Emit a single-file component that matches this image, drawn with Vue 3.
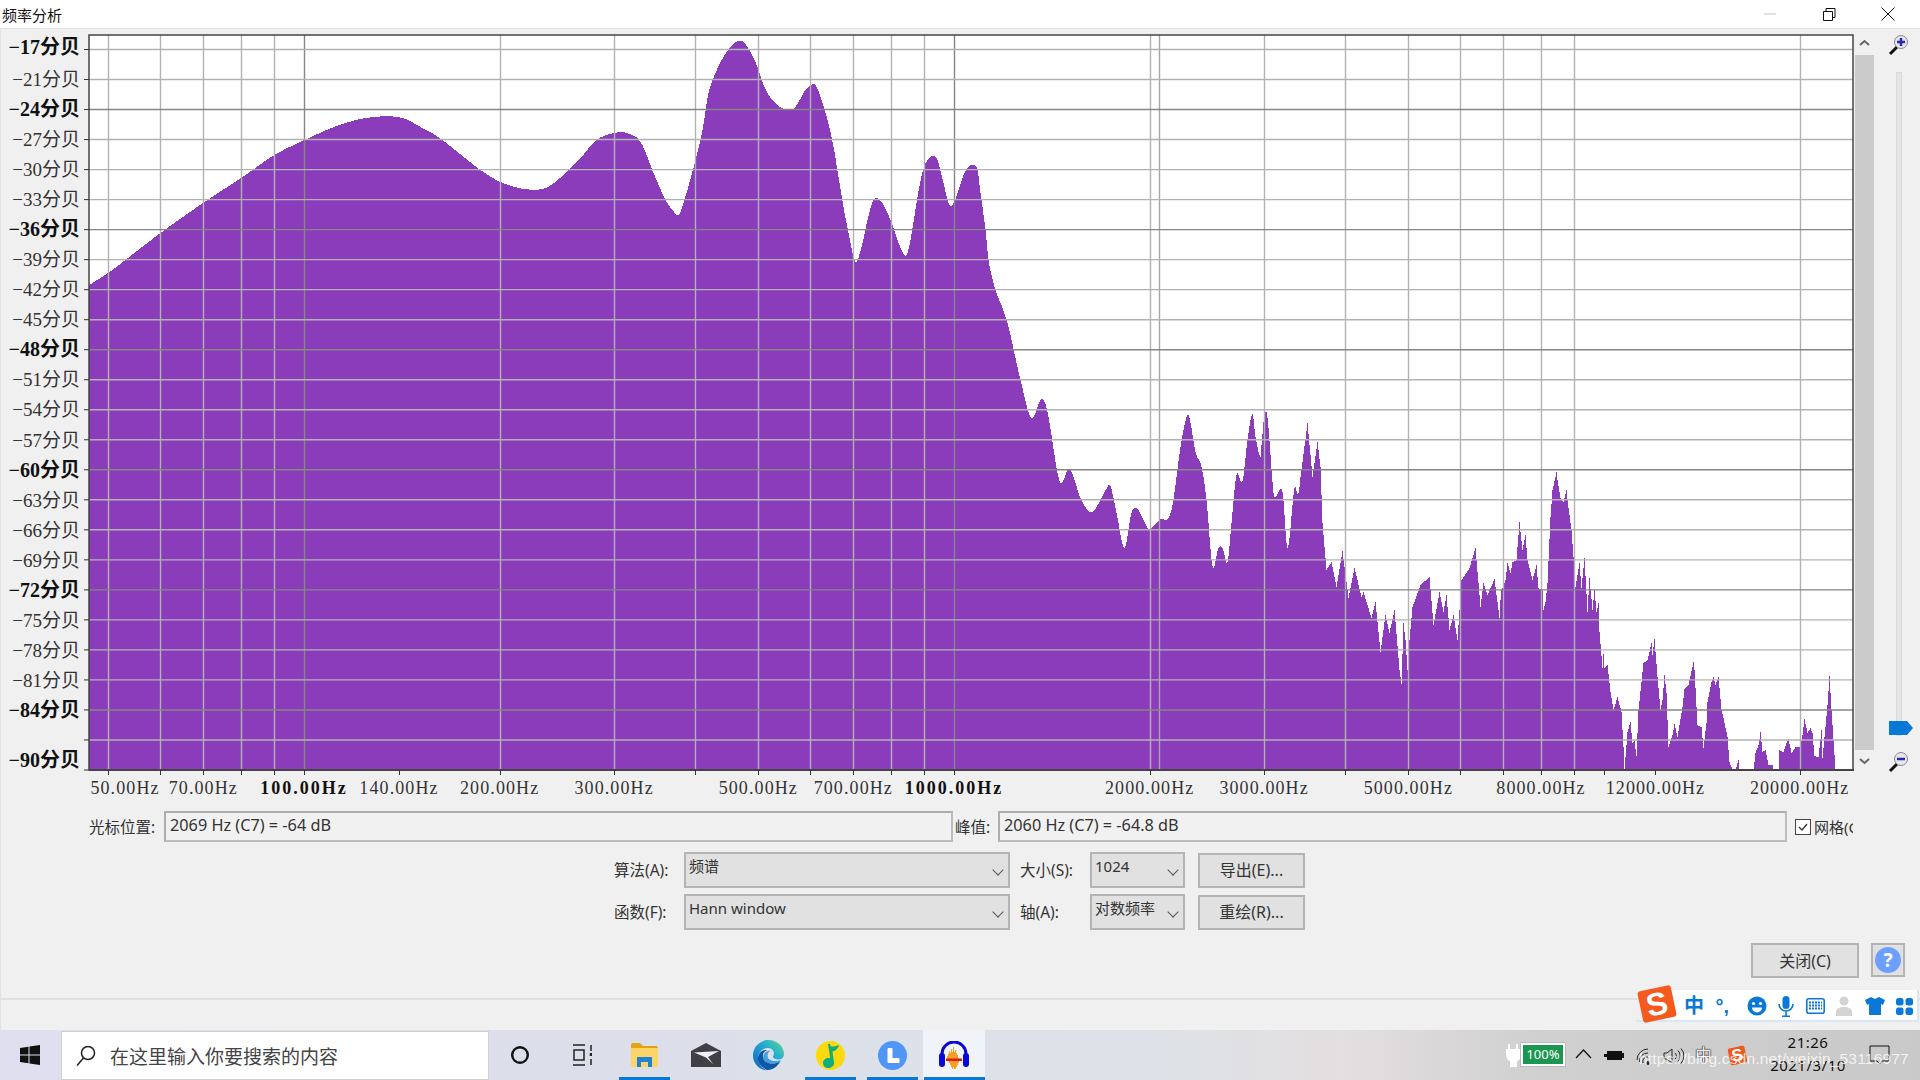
<script setup>
const left = 89
const right = 1853
const top = 6
const bottom = 741
const offsetY = 29

const labels = [-17, -21, -24, -27, -30, -33, -36, -39, -42, -45, -48, -51, -54, -57, -60, -63, -66, -69, -72, -75, -78, -81, -84]
const boldDb = [-17, -24, -36, -48, -60, -72, -84]

const hLines = []
for (let i = 0; i < 24; i++) {
  const y = 49.5 + i * 30.02 - offsetY
  const db = labels[i]
  hLines.push({ y, db, major: db === undefined ? false : (boldDb.includes(db) && db !== -17) })
}

const freqX = (f) => 304 + 650 * Math.log10(f / 100)

const gridFreq = [50, 60, 70, 80, 90, 100, 200, 300, 400, 500, 600, 700, 800, 900, 1000, 2000, 3000, 4000, 5000, 6000, 7000, 8000, 9000, 20000]
const vLines = gridFreq.map((f) => ({ x: Math.round(freqX(f)) + 0.5, major: f === 100 || f === 1000 }))
const tickFreq = [...gridFreq, 140, 10000, 12000]
const ticks = tickFreq.map((f) => Math.round(freqX(f)) + 0.5)

const freqLabels = [
  { f: 50, t: '50.00Hz', x: 125 }, { f: 70, t: '70.00Hz' }, { f: 100, t: '100.00Hz', bold: true },
  { f: 140, t: '140.00Hz' }, { f: 200, t: '200.00Hz' }, { f: 300, t: '300.00Hz' },
  { f: 500, t: '500.00Hz' }, { f: 700, t: '700.00Hz' }, { f: 1000, t: '1000.00Hz', bold: true },
  { f: 2000, t: '2000.00Hz' }, { f: 3000, t: '3000.00Hz' }, { f: 5000, t: '5000.00Hz' },
  { f: 8000, t: '8000.00Hz' }, { f: 12000, t: '12000.00Hz' }, { f: 20000, t: '20000.00Hz' }
].map((l) => ({ ...l, x: l.x || freqX(l.f) }))

// traced from the spectrum, page coordinates
const trace = [
  [89, 285], [109, 272], [160, 233], [204, 202], [242, 177], [274, 155], [304, 140], [339, 125], [369, 117.5], [400, 117.5],
  [420, 127], [439, 138], [480, 170], [500, 182], [524, 189], [545, 188], [563, 175], [580, 158], [596, 140], [614, 133], [626, 133],
  [640, 142], [653, 173], [665, 200], [672, 210], [678, 215], [683, 203], [695, 160], [702, 130], [708, 93], [715, 73], [723, 57],
  [732, 45], [738, 41], [743, 42], [750, 52], [757, 67], [762, 82], [768, 95], [777, 105], [784, 109], [793, 109], [798, 102],
  [805, 90], [812, 84], [815, 85], [820, 97], [827, 120], [833, 147], [838, 177], [843, 207], [848, 233], [855, 262], [862, 243],
  [867, 220], [872, 202], [876, 198], [883, 205], [890, 220], [897, 240], [902, 252], [906, 255], [910, 240], [917, 197], [922, 172],
  [927, 160], [933, 156], [937, 160], [943, 183], [948, 203], [952, 205], [957, 193], [963, 175], [968, 167], [973, 165], [977, 170],
  [980, 193], [985, 230], [988, 260], [995, 290], [1002, 308], [1008, 327],
  [1020, 380], [1031, 418], [1041, 399], [1047, 412], [1057, 473], [1061, 483], [1069, 469], [1080, 498], [1088, 511],
  [1094, 510], [1107, 487], [1110, 486], [1116, 513], [1124, 548], [1131, 513], [1137, 509], [1147, 528], [1150, 529], [1160, 519],
  [1167, 519], [1172, 505], [1180, 447], [1186, 417], [1189, 418], [1195, 452], [1201, 467], [1206, 500], [1212, 566], [1218, 548],
  [1222, 548], [1227, 562], [1231, 523], [1236, 475], [1242, 481], [1247, 440], [1252, 414], [1255, 437], [1260, 457], [1261, 445],
  [1264, 415], [1267, 418], [1273, 493], [1275, 497], [1282, 492], [1287, 548], [1294, 488], [1298, 493], [1307, 423], [1312, 477],
  [1317, 442], [1320, 467], [1322, 523], [1326, 570], [1331, 562], [1336, 587], [1342, 551], [1348, 598], [1354, 568], [1361, 597],
  [1363, 592], [1371, 618], [1375, 602], [1380, 652], [1385, 615], [1389, 633], [1394, 610], [1399, 670], [1401, 684], [1403, 623],
  [1405, 640], [1407, 670], [1409, 640], [1412, 607], [1420, 585], [1429, 577], [1433, 625], [1439, 592], [1443, 612], [1446, 595],
  [1449, 630], [1453, 615], [1457, 640], [1461, 580], [1469, 568], [1475, 548], [1480, 607], [1483, 583], [1487, 595], [1494, 579],
  [1499, 618], [1500, 600], [1501, 590], [1505, 580], [1507, 563], [1510, 573], [1512, 562], [1516, 560], [1519, 522], [1520, 532],
  [1522, 550], [1525, 535], [1527, 560], [1532, 580], [1536, 565], [1538, 588], [1542, 590], [1543, 610], [1545, 602], [1547, 583],
  [1550, 517], [1552, 490], [1556, 472], [1557, 480], [1560, 498], [1563, 502], [1566, 490], [1568, 508], [1571, 530], [1573, 557],
  [1575, 587], [1579, 563], [1581, 588], [1584, 558], [1587, 612], [1589, 578], [1592, 610], [1594, 590], [1596, 612], [1598, 603],
  [1599, 632], [1602, 668], [1603, 654], [1604, 668], [1607, 665], [1610, 692], [1613, 710], [1617, 697], [1621, 712], [1623, 747],
  [1624, 770], [1627, 732], [1630, 722], [1632, 743], [1634, 741], [1636, 756], [1638, 710], [1643, 663], [1647, 660], [1651, 643],
  [1652, 655], [1654, 639], [1657, 677], [1660, 710], [1662, 700], [1664, 675], [1666, 693], [1668, 747], [1672, 735], [1674, 724],
  [1677, 737], [1682, 707], [1684, 689], [1688, 685], [1693, 662], [1694, 670], [1697, 725], [1701, 727], [1703, 748], [1706, 723],
  [1707, 702], [1711, 682], [1713, 677], [1715, 685], [1718, 677], [1721, 710], [1723, 718], [1727, 737], [1729, 762], [1732, 770],
  [1735, 770], [1738, 760], [1739, 770], [1753, 770], [1755, 753], [1758, 745], [1760, 732], [1762, 752], [1765, 750], [1768, 765],
  [1772, 765], [1773, 770], [1778, 770], [1779, 750], [1783, 752], [1786, 743], [1788, 739], [1791, 753], [1795, 747], [1800, 747],
  [1802, 735], [1804, 719], [1807, 733], [1810, 728], [1812, 733], [1814, 756], [1818, 757], [1821, 730], [1822, 758], [1825, 727],
  [1827, 705], [1829, 676], [1831, 710], [1833, 740], [1835, 770]
]

// smooth below about 1300 px, raw steps above it, like the real one pixel bars
function sampleSpectrum() {
  const out = [[89, 770 - offsetY]]
  let i = 0
  for (let x = 89; x < 1835; x++) {
    while (i < trace.length - 2 && trace[i + 1][0] <= x) i++
    const [x0, y0] = trace[i]
    const [x1, y1] = trace[i + 1]
    const t = (x - x0) / (x1 - x0)
    let y = y0 + (y1 - y0) * t
    if (x < 1300 && i > 0 && i < trace.length - 2) {
      const h = x1 - x0
      const m0 = ((y1 - trace[i - 1][1]) / (x1 - trace[i - 1][0])) * h
      const m1 = ((trace[i + 2][1] - y0) / (trace[i + 2][0] - x0)) * h
      const t2 = t * t
      const t3 = t2 * t
      y = (2 * t3 - 3 * t2 + 1) * y0 + (t3 - 2 * t2 + t) * m0 + (-2 * t3 + 3 * t2) * y1 + (t3 - t2) * m1
    }
    const py = Math.round(y) - offsetY
    out.push([x, py], [x + 1, py])
  }
  out.push([1835, 770 - offsetY])
  return out.map((p) => p.join(',')).join(' ')
}
const spectrum = sampleSpectrum()

const underlined = [
  { x: 619, w: 51 }, { x: 805, w: 51 }, { x: 867, w: 51 }, { x: 924, w: 61 }
]
</script>

<template>
  <div class="screen">
    <header class="titlebar">
      <span class="title">频率分析</span>
      <div class="win-btns">
        <span class="win-btn"><svg width="14" height="14" viewBox="0 0 14 14"><path d="M1 7h12" stroke="#c4c4c4" fill="none" /></svg></span>
        <span class="win-btn"><svg width="14" height="14" viewBox="0 0 14 14"><path d="M1.5 4.5h9v9h-9zM4 4.5v-3h9v9h-2.500" stroke="#111" fill="none" /></svg></span>
        <span class="win-btn"><svg width="14" height="14" viewBox="0 0 14 14"><path d="M.5.5l13 13M13.500.5l-13 13" stroke="#111" fill="none" /></svg></span>
      </div>
    </header>

    <main class="main">
      <div class="plot-row">
        <svg class="plot" width="1855" height="770" viewBox="0 0 1855 770">
          <rect :x="left" :y="top" :width="right - left" :height="bottom - top" fill="#fff" />
          <polygon :points="spectrum" fill="#8a3cbb" />
          <line v-for="v in vLines" :key="'v' + v.x" :x1="v.x" :x2="v.x" :y1="top" :y2="bottom" :stroke="v.major ? '#868686' : '#b2b2b2'" stroke-width="1.4" />
          <line x1="1159.500" x2="1159.500" :y1="top" :y2="bottom" stroke="#a6a6a6" stroke-width="1.4" />
          <line v-for="h in hLines" :key="'h' + h.y" :x1="left" :x2="right" :y1="h.y" :y2="h.y" :stroke="h.major ? '#868686' : '#b2b2b2'" stroke-width="1.4" />
          <rect :x="left" :y="top" :width="right - left" :height="bottom - top" fill="none" stroke="#444" stroke-width="1.500" />
          <line :x1="left" :x2="right + 1" :y1="bottom" :y2="bottom" stroke="#444" stroke-width="2" />

          <line v-for="h in hLines" :key="'lt' + h.y" x1="84" :x2="left" :y1="h.y" :y2="h.y" stroke="#333" />
          <line x1="84" :x2="left" :y1="bottom" :y2="bottom" stroke="#333" />
          <line v-for="t in ticks" :key="'bt' + t" :x1="t" :x2="t" :y1="bottom" :y2="bottom + 5" stroke="#333" />

          <template v-for="(h, i) in hLines" :key="'lb' + i">
            <text v-if="h.db !== undefined" class="db" :class="{ bold: boldDb.includes(h.db) }" x="80" :y="i === 0 ? h.y + 4 : Math.round(h.y + 6 + i / 16)" text-anchor="end">{{ '−' + Math.abs(h.db) }}分贝</text>
          </template>
          <text class="db bold" x="80" y="738" text-anchor="end">−90分贝</text>

          <text v-for="l in freqLabels" :key="l.t" class="hz" :class="{ bold: l.bold }" :x="l.x" y="765" text-anchor="middle">{{ l.t }}</text>
        </svg>

        <div class="vscroll">
          <svg width="19" height="26" viewBox="0 0 19 26"><path d="M5 16l4.500-4 4.500 4" stroke="#666" stroke-width="2" fill="none" /></svg>
          <div class="thumb"></div>
          <svg width="19" height="26" viewBox="0 0 19 26"><path d="M5 9l4.500 4 4.500-4" stroke="#666" stroke-width="2" fill="none" /></svg>
        </div>

        <div class="zoom-col">
          <svg width="22" height="22" viewBox="0 0 22 22">
            <path d="M2 20l7-7" stroke="#111" stroke-width="3" />
            <circle cx="13" cy="8" r="6.500" fill="#e6e6f0" stroke="#888" />
            <path d="M13 4v8M9 8h8" stroke="#2a2aa8" stroke-width="2.500" />
          </svg>
          <div class="rail"><span class="slider"></span></div>
          <svg width="22" height="22" viewBox="0 0 22 22">
            <path d="M2 20l7-7" stroke="#111" stroke-width="3" />
            <circle cx="13" cy="8" r="6.500" fill="#e6e6f0" stroke="#888" />
            <path d="M9 8h8" stroke="#2a2aa8" stroke-width="2.500" />
          </svg>
        </div>
      </div>

      <div class="readout">
        <span class="lbl cursor-lbl">光标位置:</span>
        <div class="field cursor-field">2069 Hz (C7) = -64 dB</div>
        <span class="lbl peak-lbl">峰值:</span>
        <div class="field peak-field">2060 Hz (C7) = -64.8 dB</div>
        <span class="check"><svg width="14" height="14" viewBox="0 0 14 14"><path d="M3 7l3 3 5-6" stroke="#333" stroke-width="1.300" fill="none" /></svg></span>
        <span class="lbl grid-lbl">网格(G)</span>
      </div>

      <div class="controls">
        <span class="lbl">算法(A):</span>
        <div class="select">频谱<i class="chev"></i></div>
        <span class="lbl second">大小(S):</span>
        <div class="select">1024<i class="chev"></i></div>
        <button class="btn side">导出(E)...</button>
        <span class="lbl">函数(F):</span>
        <div class="select">Hann window<i class="chev"></i></div>
        <span class="lbl second">轴(A):</span>
        <div class="select">对数频率<i class="chev"></i></div>
        <button class="btn side">重绘(R)...</button>
      </div>

      <div class="close-row">
        <button class="btn close">关闭(C)</button>
        <button class="btn help"><span class="q">?</span></button>
      </div>

      <div class="status"></div>
    </main>

    <footer class="taskbar">
      <span v-for="u in underlined" :key="u.x" class="under" :style="{ left: u.x + 'px', width: u.w + 'px' }"></span>
      <div class="start">
        <svg width="20" height="20" viewBox="0 0 20 20" fill="#111"><path d="M0 3l8.500-1.300v7.800H0zM9.500 1.500L20 0v9.500H9.500zM0 10.500h8.500v7.800L0 17zM9.500 10.500H20V20L9.500 18.500z" /></svg>
      </div>
      <div class="search">
        <svg width="20" height="22" viewBox="0 0 20 22"><circle cx="12" cy="8" r="6.500" fill="none" stroke="#222" stroke-width="1.500" /><path d="M7.500 13L1 20.500" stroke="#222" stroke-width="1.500" /></svg>
        <span>在这里输入你要搜索的内容</span>
      </div>
      <div class="task cortana"><svg width="20" height="20" viewBox="0 0 20 20"><circle cx="10" cy="10" r="7.800" fill="none" stroke="#111" stroke-width="2.400" /></svg></div>
      <div class="task view">
        <svg width="20" height="22" viewBox="0 0 20 22" fill="none" stroke="#222" stroke-width="1.500"><path d="M1 1h12M1 21h12M2 6h10v10H2zM19 1v6M19 15v6" /><path d="M19 9v3" stroke-width="2.500" /></svg>
      </div>
      <div class="task explorer">
        <svg width="27" height="24" viewBox="0 0 27 24">
          <path d="M0 2a2 2 0 0 1 2-2h7l3 3h13a2 2 0 0 1 2 2v2H0z" fill="#e3a413" />
          <path d="M0 5h27v17a2 2 0 0 1-2 2H2a2 2 0 0 1-2-2z" fill="#fdd468" />
          <path d="M6 24V14h15v10h-4v-5h-7v5z" fill="#1f82d4" />
        </svg>
      </div>
      <div class="task mail">
        <svg width="30" height="24" viewBox="0 0 30 24">
          <path d="M0 8L15 0l15 8v16H0z" fill="#3f3f44" />
          <path d="M3 9.500L28 8l-11 6 5 7-7-6.500z" fill="#eef0f5" />
        </svg>
      </div>
      <div class="task edge">
        <svg width="31" height="31" viewBox="0 0 31 31">
          <defs>
            <linearGradient id="edgeG" x1="1" y1="0" x2="0" y2="1">
              <stop offset="0" stop-color="#62d57a" />
              <stop offset=".35" stop-color="#27b4cf" />
              <stop offset=".8" stop-color="#1576cc" />
              <stop offset="1" stop-color="#0f5fb2" />
            </linearGradient>
          </defs>
          <path d="M15.500 0C24 0 31 6.500 31 14c0 3-2 5.500-5.500 5.500-3 0-5-1-5.500-2.500-.4-1 1-1.500 1-3.500C21 10 18 8 14.500 8 10 8 6 12 5 17c-.5 5 3 11 9 13.500C6 30 0 23 0 15.500 0 7 7 0 15.500 0z" fill="url(#edgeG)" />
          <path d="M5 17c1-5 5-7.500 9-7-4 2-5 5-3.500 9 2 4.500 10 6.500 17 2-3 5.500-8 9.500-13.500 9C8 27 4 22.500 5 17z" fill="#0e56a6" />
          <path d="M10.500 19c2 4.500 10 6.500 17 2l1-1c-3 1-8 2-12-.5-3-2-2.500-7 1-9-4 0-8.500 3.500-7 8.500z" fill="#1a8fd8" opacity=".8" />
        </svg>
      </div>
      <div class="task qq">
        <svg width="29" height="29" viewBox="0 0 29 29">
          <circle cx="14.500" cy="14.500" r="14.500" fill="#fcd90c" />
          <path d="M12 3h2c0 3 2 3.500 9 1-1 4-3.500 6-6.500 6.500l1.500 11c.5 3-2.500 5.500-5.500 5.500s-5.500-2-5.500-5 2.500-5 5.500-5c.6 0 1.200.1 1.700.3z" fill="#10ad7e" />
        </svg>
      </div>
      <div class="task lapp">
        <svg width="29" height="29" viewBox="0 0 29 29">
          <circle cx="14.500" cy="14.500" r="14.500" fill="#4f96f7" />
          <path d="M10 7.500h4v10h7v4H10z" fill="#fff" stroke="#fff" stroke-linejoin="round" />
        </svg>
      </div>
      <div class="task audacity">
        <svg width="32" height="28" viewBox="0 0 32 28">
          <path d="M4 18v-5a12 12 0 0 1 24 0v5" fill="none" stroke="#0a0ad0" stroke-width="3" />
          <rect x="1" y="12" width="6" height="14" rx="3" fill="#0a0ad0" />
          <rect x="25" y="12" width="6" height="14" rx="3" fill="#0a0ad0" />
          <path d="M8 18h1v-3h1v-2h1v-3h1v2h1V8h1v3h1V6h1v5h1V9h1v3h1v2h1v3h1v2h1v1h-1v2h-1v2h-1v2h-1v2h-2v-2h-1v3h-1v-3h-1v-2h-1v-2h-1v-2H9v-2H8z" fill="#f5a11e" />
          <path d="M8 17.500h16v2.500H8z" fill="#e01818" />
        </svg>
      </div>

      <div class="tray">
        <svg class="tray-item plug" width="15" height="24" viewBox="0 0 15 24"><path d="M3 1v6M11 1v6M1 7h13v5a6 6 0 0 1-4 5.500V23H5v-5.500A6 6 0 0 1 1 12z" fill="#fff" stroke="#fff" stroke-width="2" /></svg>
        <div class="tray-item batt"><span>100%</span></div>
        <svg class="tray-item chevup" width="17" height="10" viewBox="0 0 17 10"><path d="M1 9l7.500-8L16 9" fill="none" stroke="#111" stroke-width="1.200" /></svg>
        <svg class="tray-item mini" width="21" height="14" viewBox="0 0 21 14"><path d="M1 3v3M5 3v3M1 6h4v3H1zM4 3h15v9H4z" fill="#111" /><rect x="19" y="5" width="2" height="5" fill="#111" /></svg>
        <svg class="tray-item wifi" width="18" height="18" viewBox="0 0 18 18" fill="none" stroke="#222"><path d="M1 12A11 11 0 0 1 12 1M3.500 14A8 8 0 0 1 12 5M7 15a4.500 4.500 0 0 1 5-6" /><circle cx="12" cy="15" r="1.400" fill="#222" /></svg>
        <svg class="tray-item speaker" width="21" height="18" viewBox="0 0 21 18" fill="none" stroke="#222"><path d="M1 6h3l5-4v14l-5-4H1zM12 6a4 4 0 0 1 0 6M15 3.500a8 8 0 0 1 0 11M18 1.500a11 11 0 0 1 0 15" /></svg>
        <span class="tray-item ime-zh">中</span>
        <svg class="tray-item sogou-small" width="21" height="21" viewBox="0 0 21 21">
          <rect x="2" y="2" width="17" height="17" rx="2" fill="#f0581d" transform="rotate(-12 10.500 10.500)" />
          <text x="10.500" y="16" text-anchor="middle" class="s-mark small" transform="rotate(-12 10.500 10.500)">S</text>
        </svg>
        <div class="tray-item clock"><span>21:26</span><span>2021/3/10</span></div>
        <svg class="tray-item notify" width="21" height="22" viewBox="0 0 21 22" fill="none" stroke="#111"><path d="M1 1h19v15h-7l-2.500 3L8 16H1z" /></svg>
      </div>
      <span class="watermark">https://blog.csdn.net/weixin_53116977</span>
    </footer>

    <div class="ime">
      <svg class="ime-logo" width="42" height="40" viewBox="0 0 42 40">
        <rect x="4" y="4" width="34" height="32" rx="3" fill="#f4591d" transform="rotate(-12 21 20)" />
        <text x="21" y="31" text-anchor="middle" class="s-mark" transform="rotate(-12 21 20)">S</text>
      </svg>
      <span class="ime-glyph">中</span>
      <span class="ime-glyph punct">°,</span>
      <svg width="20" height="20" viewBox="0 0 20 20"><circle cx="10" cy="10" r="9.500" fill="#0a78d7" /><circle cx="6.500" cy="7.500" r="1.600" fill="#fff" /><circle cx="13.500" cy="7.500" r="1.600" fill="#fff" /><path d="M5 11.500h10a5 5 0 0 1-10 0z" fill="#fff" /></svg>
      <svg width="16" height="21" viewBox="0 0 16 21"><rect x="4.500" y="0" width="7" height="13" rx="3.500" fill="#0a78d7" /><path d="M1 8a7 7 0 0 0 14 0M8 15v5M4 20.300h8" fill="none" stroke="#0a78d7" stroke-width="1.600" /></svg>
      <svg width="19" height="16" viewBox="0 0 19 16"><rect x=".8" y=".8" width="17.400" height="14.400" rx="2" fill="#fff" stroke="#0a78d7" stroke-width="1.600" /><path d="M3 4.500h13M3 7.500h13M3 10.500h13" stroke="#0a78d7" stroke-width="1.800" stroke-dasharray="2 1" /></svg>
      <svg width="17" height="20" viewBox="0 0 17 20"><circle cx="8" cy="5" r="4.500" fill="#d4d4d4" /><path d="M0 20v-4c0-3 3-5 8-5s8 2 8 5v4z" fill="#d4d4d4" /></svg>
      <svg width="20" height="18" viewBox="0 0 20 18"><path d="M6 0l4 2 4-2 6 3-2 5-2-1v11H4V7L2 8 0 3z" fill="#0a78d7" /></svg>
      <svg width="17" height="17" viewBox="0 0 17 17" fill="#0a78d7"><rect width="7.500" height="7.500" rx="2.500" /><rect x="9.500" width="7.500" height="7.500" rx="2.500" /><rect y="9.500" width="7.500" height="7.500" rx="2.500" /><rect x="9.500" y="9.500" width="7.500" height="7.500" rx="2.500" /></svg>
    </div>
  </div>
</template>

<style scoped>
.screen {
  position: relative;
  width: 1920px;
  height: 1080px;
  overflow: hidden;
  font-family: "Noto Sans", "Noto Sans CJK SC", sans-serif;
  color: #222;
}

.titlebar {
  height: 28px;
  background: #fff;
  border-bottom: 1px solid #e2e2e2;
  display: flex;
  align-items: center;
  justify-content: space-between;
}

.title {
  font-size: 15px;
  padding-left: 2px;
  color: #111;
}

.win-btns {
  display: flex;
  margin-right: 3px;
}

.win-btn {
  width: 59px;
  display: flex;
  justify-content: center;
}

.main {
  height: 1001px;
  background: #f0f0f0;
  border-left: 1px solid #e2e2e2;
  box-sizing: border-box;
}

.plot-row {
  display: flex;
  height: 770px;
  margin-left: -1px;
}

.plot {
  display: block;
  flex: none;
}

.plot .db {
  font-family: "Liberation Serif", "Noto Sans CJK SC", serif;
  font-size: 19px;
  fill: #333;
}

.plot .hz {
  font-family: "Liberation Serif", "Noto Sans CJK SC", serif;
  font-size: 18px;
  letter-spacing: 1.1px;
  fill: #333;
}

.plot .bold {
  font-weight: 700;
  fill: #111;
}

.plot .db.bold {
  font-size: 20px;
}

.plot .hz.bold {
  letter-spacing: 2px;
}

.vscroll {
  width: 19px;
  height: 747px;
  display: flex;
  flex-direction: column;
  flex: none;
}

.vscroll svg {
  flex: none;
}

.thumb {
  flex: 1;
  background: #cbcbcb;
}

.zoom-col {
  flex: 1;
  display: flex;
  flex-direction: column;
  align-items: center;
  padding: 5px 0 26px 4px;
}

.zoom-col svg {
  flex: none;
}

.rail {
  position: relative;
  flex: 1;
  width: 4px;
  background: #e6e6e6;
  border: 1px solid #dadada;
  margin: 16px 0 15px;
}

.slider {
  position: absolute;
  left: -8px;
  bottom: 0;
  width: 24px;
  height: 14px;
  background: #0a78d7;
  clip-path: polygon(0 0, 75% 0, 100% 50%, 75% 100%, 0 100%);
}

.readout {
  display: flex;
  align-items: center;
  height: 31px;
  margin-top: 12px;
  padding-left: 88px;
}

.lbl {
  font-size: 15.500px;
  color: #333;
  white-space: nowrap;
}

.cursor-lbl {
  width: 75px;
}

.field {
  box-sizing: border-box;
  height: 31px;
  border: 2px solid #adadad;
  border-right-color: #bdbdbd;
  border-bottom-color: #bdbdbd;
  background: #f1f1f1;
  padding-left: 4px;
  font-size: 16.250px;
  line-height: 25px;
  color: #333;
}

.cursor-field {
  width: 789px;
}

.peak-lbl {
  width: 45px;
  padding-left: 2px;
  box-sizing: border-box;
}

.peak-field {
  width: 789px;
}

.check {
  box-sizing: border-box;
  width: 16px;
  height: 16px;
  border: 1px solid #444;
  background: #fff;
  margin-left: 8px;
  display: flex;
}

.grid-lbl {
  width: 39px;
  overflow: hidden;
  margin-left: 3px;
  font-size: 15px;
}

.controls {
  display: grid;
  grid-template-columns: 70px 326px 80px 95px 120px;
  grid-auto-rows: 36px;
  row-gap: 6px;
  margin-top: 10px;
  padding-left: 613px;
  align-items: center;
}

.controls .lbl {
  padding-bottom: 2px;
}

.second {
  padding-left: 10px;
}

.select {
  position: relative;
  box-sizing: border-box;
  height: 36px;
  background: #e1e1e1;
  border: 2px solid #b4b4b4;
  padding: 0 0 0 3px;
  font-size: 15px;
  line-height: 24px;
  color: #333;
  white-space: nowrap;
}

.chev {
  position: absolute;
  right: 6px;
  top: 12px;
  width: 7px;
  height: 7px;
  border-right: 1.500px solid #555;
  border-bottom: 1.500px solid #555;
  transform: rotate(45deg);
}

.btn {
  box-sizing: border-box;
  background: #e1e1e1;
  border: 2px solid #b4b4b4;
  padding: 0 0 2px;
  font-family: inherit;
  font-size: 16px;
  color: #333;
}

.side {
  width: 107px;
  height: 35px;
  margin-left: 13px;
}

.close-row {
  display: flex;
  align-items: flex-start;
  margin-top: 13px;
  padding-left: 1750px;
  height: 35px;
}

.close {
  width: 108px;
  height: 35px;
}

.help {
  width: 34px;
  height: 34px;
  margin-left: 12px;
  padding: 0;
  display: flex;
  align-items: center;
  justify-content: center;
}

.q {
  width: 26px;
  height: 26px;
  border-radius: 50%;
  background: #6c9fff;
  color: #fff;
  font-weight: 700;
  font-size: 19px;
  line-height: 26px;
}

.status {
  margin-top: 20px;
  border-top: 2px solid #e0e0e0;
}

.taskbar {
  position: relative;
  height: 50px;
  background: linear-gradient(90deg, #dfdff0 0%, #dcdfea 30%, #dde2e8 60%, #e4dfe0 70%, #d0d0d0 80%, #c9c9c9 100%);
  display: flex;
  align-items: center;
}

.under {
  position: absolute;
  bottom: 0;
  height: 3px;
  background: #0a78d7;
  z-index: 1;
}

.start {
  width: 61px;
  flex: none;
  display: flex;
  justify-content: center;
  padding-right: 2px;
  box-sizing: border-box;
}

.search {
  box-sizing: border-box;
  width: 428px;
  height: 49px;
  margin-top: 1px;
  background: #fff;
  border: 1px solid #d0d0d0;
  flex: none;
  display: flex;
  align-items: center;
  padding-left: 14px;
  gap: 14px;
  font-size: 19px;
  color: #444;
}

.task {
  flex: none;
  width: 62px;
  height: 100%;
  display: flex;
  align-items: center;
  justify-content: center;
  box-sizing: border-box;
}

.audacity {
  background: #f0f3f8;
}

.tray {
  position: absolute;
  inset: 0;
  pointer-events: none;
}

.tray-item {
  position: absolute;
}

.plug { left: 1506px; top: 13px; }

.batt {
  left: 1521px;
  top: 13px;
  box-sizing: border-box;
  width: 44px;
  height: 23px;
  border: 2px solid #fff;
  outline: 1px solid #bbb;
  background: #1b9650;
  color: #fff;
  font-size: 13px;
  line-height: 19px;
  text-align: center;
}

.chevup { left: 1575px; top: 19px; }
.mini { left: 1603px; top: 18px; }
.wifi { left: 1636px; top: 18px; }
.speaker { left: 1663px; top: 17px; }

.ime-zh {
  left: 1695px;
  top: 11px;
  font-size: 17px;
  color: #eee;
  text-shadow: 0 0 1px #222, 0 0 1px #222, 0 0 1px #222;
}

.sogou-small { left: 1727px; top: 15px; }

.clock {
  left: 1765px;
  top: 1px;
  width: 86px;
  display: flex;
  flex-direction: column;
  align-items: center;
  font-size: 15px;
  line-height: 23px;
  letter-spacing: 0.5px;
  color: #111;
}

.notify { left: 1869px; top: 15px; }

.watermark {
  position: absolute;
  left: 1639px;
  top: 20px;
  font-family: "Liberation Sans", sans-serif;
  font-size: 15.500px;
  letter-spacing: 0.2px;
  color: rgba(255, 255, 255, 0.78);
  white-space: nowrap;
}

.s-mark {
  font-family: "Liberation Sans", sans-serif;
  font-weight: 700;
  font-size: 32px;
  fill: #fff;
}

.s-mark.small {
  font-size: 17px;
}

.ime {
  position: absolute;
  left: 1636px;
  top: 990px;
  width: 283px;
  height: 32px;
  display: flex;
  align-items: center;
  justify-content: space-between;
  box-sizing: border-box;
  padding: 0 6px 0 48px;
  background: linear-gradient(90deg, transparent 0 30px, #fff 30px);
  box-shadow: inset 0 -2px 0 #dbe6f4, inset -2px 0 0 #dbe6f4;
}

.ime-logo {
  position: absolute;
  left: 0;
  top: -6px;
}

.ime-glyph {
  font-size: 20px;
  font-weight: 700;
  color: #0a78d7;
  line-height: 1;
}

.punct {
  font-family: "Liberation Sans", sans-serif;
  width: 20px;
}
</style>

<style>
html, body {
  margin: 0;
  background: #f0f0f0;
  overflow: hidden;
}
</style>
